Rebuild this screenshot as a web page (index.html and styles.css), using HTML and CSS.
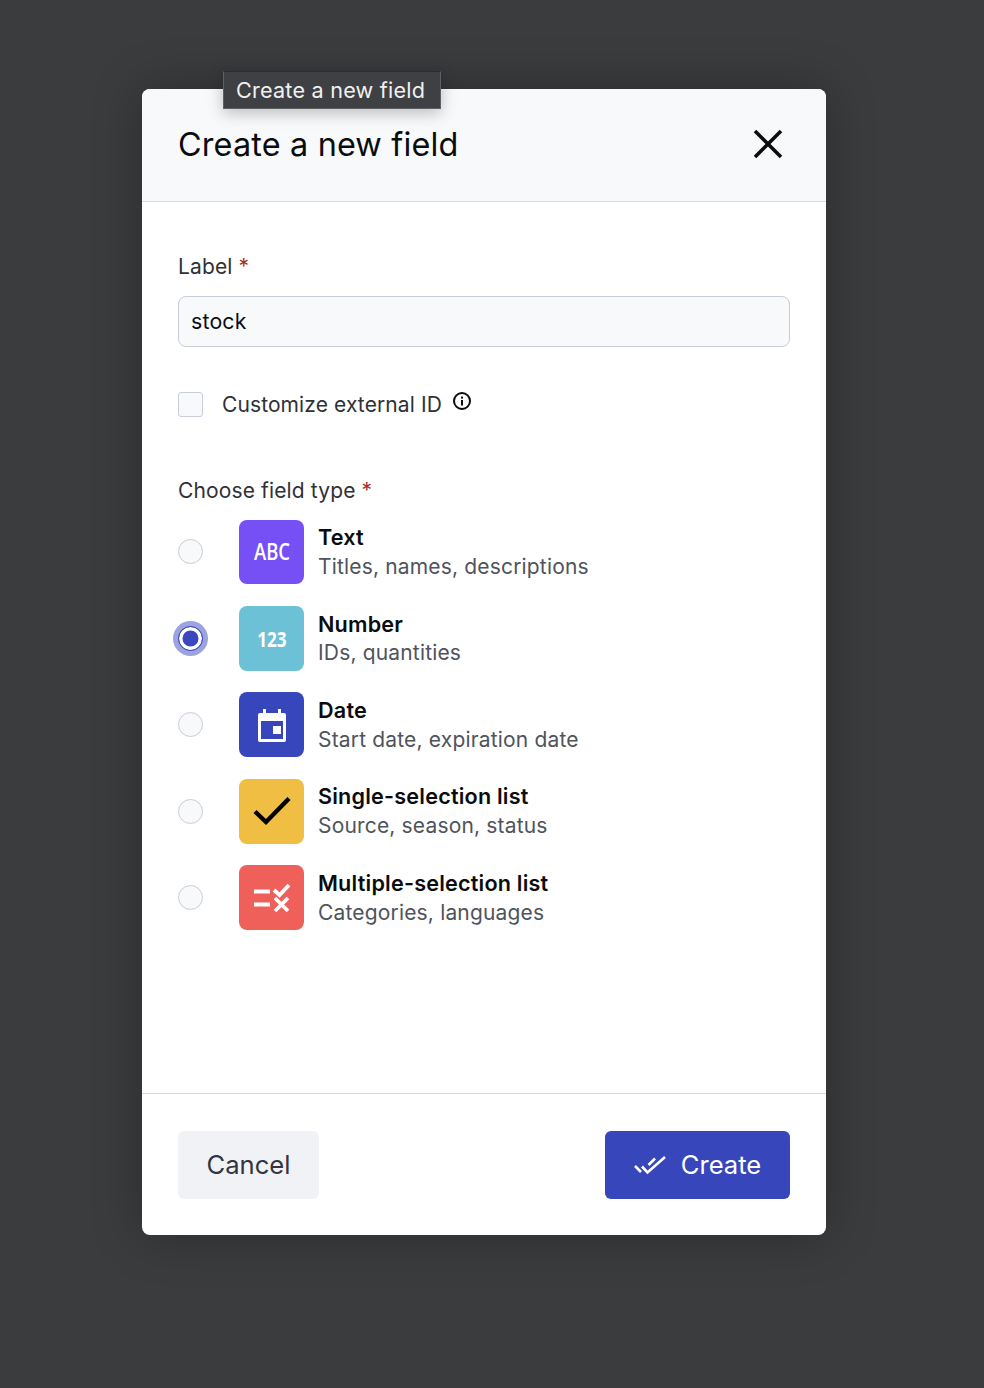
FILE: index.html
```html
<!DOCTYPE html>
<html lang="en">
<head>
<meta charset="utf-8">
<title>Create a new field</title>
<link rel="stylesheet" href="styles.css">
</head>
<body>
<div class="modal">
  <header class="modal-head">
    <h1 class="modal-title">Create a new field</h1>
    <button class="close" aria-label="Close">
      <svg width="30" height="30" viewBox="0 0 30 30"><path d="M2 2L28 28M28 2L2 28" fill="none" stroke="#0b0c0e" stroke-width="3.6"/></svg>
    </button>
    <div class="tooltip">Create a new field</div>
  </header>
  <main class="modal-body">
    <div class="field-label">Label <span class="req">*</span></div>
    <div class="input">stock</div>
    <div class="check-row">
      <span class="checkbox"></span>
      <span class="check-text">Customize external ID</span>
      <svg class="info" width="20" height="20" viewBox="0 0 20 20"><circle cx="10" cy="10" r="8" fill="none" stroke="#0b0c0e" stroke-width="2"/><rect x="9" y="9" width="2" height="5.5" fill="#0b0c0e"/><rect x="9" y="5.6" width="2" height="2" fill="#0b0c0e"/></svg>
    </div>
    <div class="field-label type-label">Choose field type <span class="req">*</span></div>
    <div class="types">
      <div class="type">
        <span class="radio"></span>
        <span class="tile purple"><span class="tile-text">ABC</span></span>
        <div class="type-text"><div class="type-name">Text</div><div class="type-desc">Titles, names, descriptions</div></div>
      </div>
      <div class="type">
        <span class="radio selected"></span>
        <span class="tile teal"><span class="tile-text tile-num">123</span></span>
        <div class="type-text"><div class="type-name">Number</div><div class="type-desc">IDs, quantities</div></div>
      </div>
      <div class="type">
        <span class="radio"></span>
        <span class="tile blue">
          <svg width="32" height="34" viewBox="0 0 32 34"><path d="M7 1h3v4h12V1h3v4h3a2 2 0 0 1 2 2v25a2 2 0 0 1-2 2H4a2 2 0 0 1-2-2V7a2 2 0 0 1 2-2h3zM5 13v18h22V13z" fill="#fff" fill-rule="evenodd"/><rect x="17" y="18" width="8" height="8" fill="#fff"/></svg>
        </span>
        <div class="type-text"><div class="type-name">Date</div><div class="type-desc">Start date, expiration date</div></div>
      </div>
      <div class="type">
        <span class="radio"></span>
        <span class="tile yellow">
          <svg width="38" height="30" viewBox="0 0 38 30"><path d="M2 15.500L13 26L36 2.500" fill="none" stroke="#000" stroke-width="4.400"/></svg>
        </span>
        <div class="type-text"><div class="type-name">Single-selection list</div><div class="type-desc">Source, season, status</div></div>
      </div>
      <div class="type">
        <span class="radio"></span>
        <span class="tile red">
          <svg width="36" height="30" viewBox="0 0 36 30"><path d="M0 8.500H16M0 21.500H16M20 7L25.500 12L35 2M21 15L34 28M34 15L21 28" fill="none" stroke="#fff" stroke-width="3.800"/></svg>
        </span>
        <div class="type-text"><div class="type-name">Multiple-selection list</div><div class="type-desc">Categories, languages</div></div>
      </div>
    </div>
  </main>
  <footer class="modal-foot">
    <button class="btn btn-cancel">Cancel</button>
    <button class="btn btn-create">
      <svg width="32" height="20" viewBox="0 0 32 20"><path d="M1 11L7 17M8 11.500L13.500 17.500L31 2M14.500 10L21 3.500" fill="none" stroke="#fff" stroke-width="2.600"/></svg>
      <span>Create</span>
    </button>
  </footer>
</div>
</body>
</html>
```
FILE: styles.css
```css
* { box-sizing: border-box; }
html, body { margin: 0; height: 100%; }
body {
  width: 984px;
  height: 1388px;
  background: #3a3c3e;
  font-family: Inter, "Liberation Sans", sans-serif;
  color: #0b0c0e;
  padding: 89px 158px 0 142px;
  overflow: hidden;
}
.modal {
  width: 684px;
  height: 1146px;
  background: #fff;
  border-radius: 8px;
  display: flex;
  flex-direction: column;
  box-shadow: 0 0 50px rgba(0, 0, 0, 0.28);
}
.modal-head {
  position: relative;
  height: 113px;
  flex: none;
  background: #f8f9fb;
  border-bottom: 1px solid #d6d8df;
  border-radius: 8px 8px 0 0;
  padding: 0 43px 0 36px;
  display: flex;
  align-items: center;
  justify-content: space-between;
}
.modal-title { margin: 0; font-size: 32.4px; font-weight: 400; line-height: 1.2; letter-spacing: 0.15px; }
.close { border: 0; background: none; padding: 0; width: 30px; height: 30px; margin-bottom: 2px; display: block; }
.close svg { display: block; }
.tooltip {
  position: absolute;
  left: 81px;
  top: -18px;
  width: 218px;
  height: 38px;
  background: #3f4043;
  border: 1px solid #5f6063;
  border-top-color: #2c2d30;
  color: #f0f0f0;
  font-size: 21.600px;
  line-height: 36px;
  letter-spacing: 0.22px;
  padding-left: 12px;
  white-space: nowrap;
  box-shadow: 0 4px 16px rgba(0, 0, 0, 0.25);
}
.modal-body { flex: 1; padding: 50px 36px 0; }
.field-label { font-size: 21px; line-height: 30px; color: #2f3136; letter-spacing: 0.13px; }
.req { color: #a92c1e; }
.input {
  margin-top: 14px;
  height: 51px;
  border: 1px solid #c9cdda;
  border-radius: 8px;
  background: #f8f9fb;
  padding: 0 12px;
  font-size: 21.300px;
  line-height: 49px;
  letter-spacing: 0.2px;
}
.check-row { margin-top: 45px; display: flex; align-items: center; height: 25px; }
.checkbox { width: 25px; height: 25px; border: 1px solid #c9cdda; border-radius: 3px; background: #f8f9fb; flex: none; }
.check-text { margin-left: 19px; font-size: 21px; line-height: 25px; color: #2f3136; letter-spacing: 0.1px; }
.info { margin: -7px 0 0 10px; }
.type-label { margin-top: 59px; }
.types { margin-top: 13.600px; display: flex; flex-direction: column; gap: 21.600px; }
.type { display: flex; align-items: center; height: 64.800px; }
.radio { width: 25px; height: 25px; border-radius: 50%; border: 1px solid #c9cdda; background: #f8f9fb; flex: none; }
.radio.selected {
  background: #3a47bd;
  border: 1px solid #3a47bd;
  box-shadow: inset 0 0 0 3.500px #fff, 0 0 0 5px #9da3de;
}
.tile {
  width: 65px;
  height: 64.800px;
  margin-left: 36px;
  border-radius: 8px;
  flex: none;
  display: flex;
  align-items: center;
  justify-content: center;
}
.tile-text { color: #fff; font-family: "Open Sans", sans-serif; font-weight: 600; font-size: 22.500px; margin-bottom: 1px; transform: scaleX(0.82); }
.tile-num { font-weight: 700; font-size: 22px; transform: scaleX(0.78); }
.purple { background: #7650f5; }
.teal { background: #6cc1d7; }
.blue { background: #3846bc; }
.yellow { background: #efbe42; }
.red { background: #f0605b; }
.type-text { margin-left: 14px; }
.type-name { font-size: 21.600px; font-weight: 600; line-height: 28.800px; letter-spacing: 0.2px; }
.type-desc { font-size: 21px; line-height: 28.800px; color: #50535b; letter-spacing: 0.17px; margin: 1px 0 -1px; }
.modal-foot {
  height: 142px;
  flex: none;
  border-top: 1px solid #d6d8df;
  padding: 37px 36px 36px;
  display: flex;
  justify-content: space-between;
}
.btn { height: 68px; border: 0; border-radius: 6px; font-family: inherit; font-size: 25.600px; padding: 0 0 2px; display: flex; align-items: center; justify-content: center; }
.btn-cancel { width: 141px; background: #f1f2f5; color: #32353d; }
.btn-create { width: 185px; background: #3846bc; color: #fff; gap: 15px; }
.btn-create svg { margin-top: 2px; }
```
